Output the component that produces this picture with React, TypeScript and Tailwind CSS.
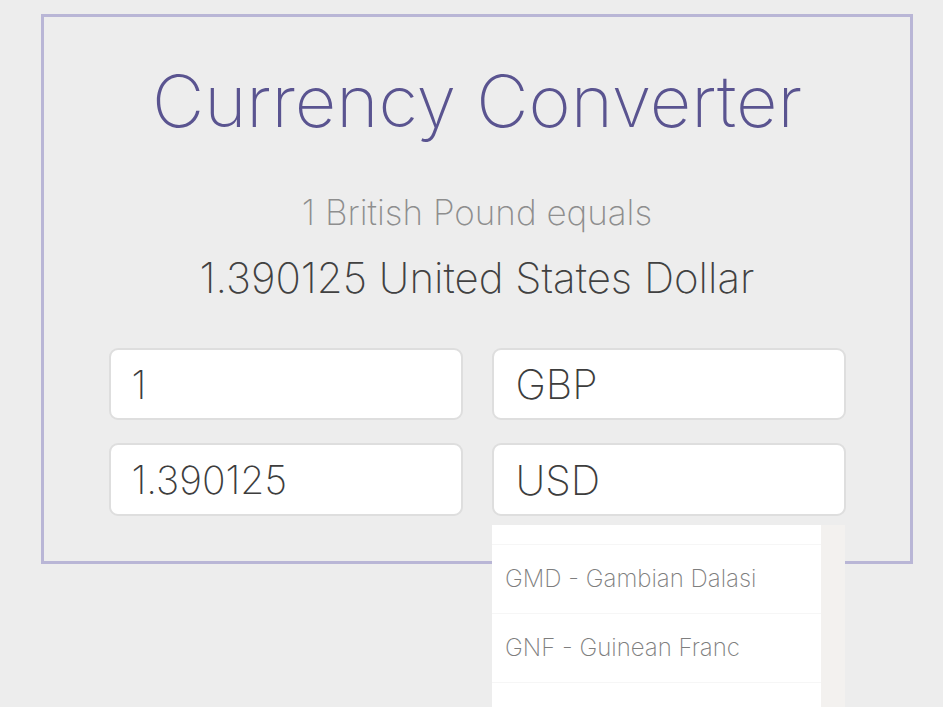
import { useState } from "react";

const options = [
  { code: "", name: "" },
  { code: "GMD", name: "Gambian Dalasi" },
  { code: "GNF", name: "Guinean Franc" },
  { code: "", name: "" },
];

export default function App() {
  const [amount, setAmount] = useState("1");
  const [from, setFrom] = useState("GBP");
  const [to, setTo] = useState("USD");
  const rate = 1.390125;

  return (
    <div className="min-h-[707px] bg-[#ededed] pt-[14px] font-['Inter',sans-serif] font-extralight overflow-hidden">
      <div className="relative ml-[41px] w-[872px] h-[550px] border-[3px] border-[#b9b6d6] flex flex-col items-center">
        <h1 className="mt-[44px] text-[72px] leading-[80px] text-[#5a5490]">
          Currency Converter
        </h1>
        <p className="mt-[53px] text-[35px] leading-[36px] text-[#8e8e8e]">1 British Pound equals</p>
        <p className="mt-[26px] text-[42px] leading-[44px] text-[#414141]">
          {rate} United States Dollar
        </p>

        <div className="mt-[48px] grid grid-cols-2 gap-x-[29px] gap-y-[23px] w-[737px]">
          <input
            value={amount}
            onChange={(e) => setAmount(e.target.value)}
            className="h-[72px] bg-white border-2 border-[#dedede] rounded-[9px] px-[21px] text-[39px] text-[#3d3d3d] outline-none"
          />
          <input
            value={from}
            onChange={(e) => setFrom(e.target.value)}
            className="h-[72px] bg-white border-2 border-[#dedede] rounded-[9px] px-[22px] text-[41px] text-[#3d3d3d] outline-none"
          />
          <input
            value={(parseFloat(amount || "0") * rate).toString()}
            readOnly
            className="h-[73px] bg-white border-2 border-[#dedede] rounded-[9px] px-[21px] text-[39px] text-[#3d3d3d] outline-none"
          />
          <input
            value={to}
            onChange={(e) => setTo(e.target.value)}
            className="h-[73px] bg-white border-2 border-[#dedede] rounded-[9px] px-[22px] text-[41px] text-[#3d3d3d] outline-none"
          />
        </div>

        {/* open select list under the USD field */}
        <div className="absolute left-[448px] top-[508px] w-[353px] h-[185px] flex overflow-hidden z-10">
          <ul className="flex-1 bg-white">
            {options.map((o, i) => (
              <li
                key={i}
                className={`${i === 0 ? "h-[20px]" : "h-[69px]"} border-b border-[#f6f6f6] px-[13px] flex items-center text-[24px] text-[#7e7e7e]`}
              >
                {o.code && `${o.code} - ${o.name}`}
              </li>
            ))}
          </ul>
          <div className="w-[24px] bg-[#f3f1ef]" />
        </div>
      </div>
    </div>
  );
}
